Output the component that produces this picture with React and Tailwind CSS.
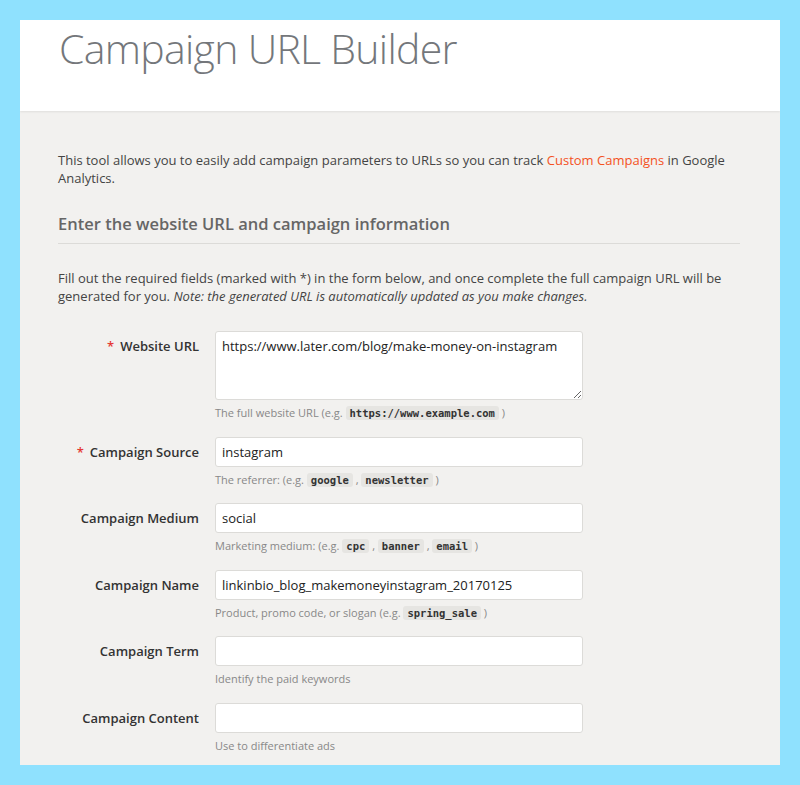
import React from "react";

const font = { fontFamily: '"Open Sans", "Liberation Sans", sans-serif' };

function Code({ children }) {
  return (
    <code className="bg-[#e6e5e2] text-[#333] rounded-[3px] px-[4px] py-[1px] text-[10.5px] font-bold font-['DejaVu_Sans_Mono',monospace]">
      {children}
    </code>
  );
}

function Row({ label, required, value, help, textarea }) {
  return (
    <div className="flex items-start mb-[15.5px]">
      <div className="w-[141px] shrink-0 text-right text-[13px] font-semibold text-[#333] leading-[18px] pt-[6px]">
        {required && <span className="text-[#e53935] mr-[6px]">*</span>}
        {label}
      </div>
      <div className="ml-[16px] w-[368px]">
        {textarea ? (
          <textarea
            readOnly
            value={value}
            className="block w-full h-[69px] bg-white border border-[#dcdbd8] rounded-[3px] px-[6px] pt-[5px] text-[13px] leading-[18px] text-[#222] resize-y outline-none"
          />
        ) : (
          <input
            readOnly
            value={value}
            className="block w-full h-[30px] bg-white border border-[#dcdbd8] rounded-[3px] px-[6px] text-[13px] text-[#222] outline-none"
          />
        )}
        <div className="mt-[5px] text-[11px] leading-[16px] text-[#888]">{help}</div>
      </div>
    </div>
  );
}

export default function App() {
  return (
    <div style={font} className="bg-[#8fe1fe] w-[800px] h-[785px] pt-[20px] px-[20px]">
      <div className="w-[760px] h-[745px] bg-[#f2f1ef] overflow-hidden">
        <div className="bg-white h-[91px] pl-[39px] pt-[4px] shadow-[0_1px_2px_rgba(0,0,0,0.08)] relative">
          <h1 className="text-[41px] font-light text-[#74777b] leading-[48px] tracking-[-0.7px]">
            Campaign URL Builder
          </h1>
        </div>
        <div className="px-[38px] pt-[40px]">
          <p className="text-[13px] leading-[18px] text-[#444] w-[684px]">
            This tool allows you to easily add campaign parameters to URLs so you can track{" "}
            <span className="text-[#f4511e]">Custom Campaigns</span> in Google Analytics.
          </p>
          <h2 className="mt-[25px] text-[16.5px] font-semibold text-[#666] leading-[24px] pb-[7px] border-b border-[#dcdbd8] w-[682px]">
            Enter the website URL and campaign information
          </h2>
          <p className="mt-[25px] text-[13px] leading-[18px] text-[#444] w-[684px]">
            Fill out the required fields (marked with *) in the form below, and once complete the full campaign URL will be generated for you.{" "}
            <em>Note: the generated URL is automatically updated as you make changes.</em>
          </p>
          <div className="mt-[26px]">
            <Row
              required
              textarea
              label="Website URL"
              value="https://www.later.com/blog/make-money-on-instagram"
              help={<>The full website URL (e.g. <Code>https://www.example.com</Code> )</>}
            />
            <Row
              required
              label="Campaign Source"
              value="instagram"
              help={<>The referrer: (e.g. <Code>google</Code> , <Code>newsletter</Code> )</>}
            />
            <Row
              label="Campaign Medium"
              value="social"
              help={<>Marketing medium: (e.g. <Code>cpc</Code> , <Code>banner</Code> , <Code>email</Code> )</>}
            />
            <Row
              label="Campaign Name"
              value="linkinbio_blog_makemoneyinstagram_20170125"
              help={<>Product, promo code, or slogan (e.g. <Code>spring_sale</Code> )</>}
            />
            <Row label="Campaign Term" value="" help="Identify the paid keywords" />
            <Row label="Campaign Content" value="" help="Use to differentiate ads" />
          </div>
        </div>
      </div>
    </div>
  );
}
